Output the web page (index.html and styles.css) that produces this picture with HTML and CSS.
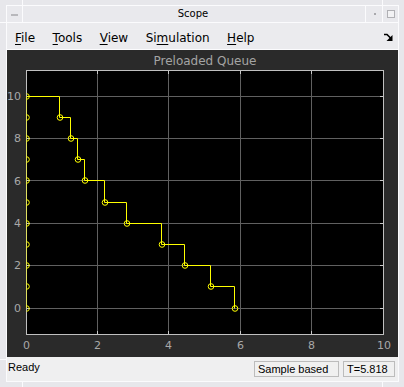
FILE: index.html
```html
<!DOCTYPE html>
<html>
<head>
<meta charset="utf-8">
<link rel="stylesheet" href="styles.css">
</head>
<body>
<div class="screen">
  <div class="window">
    <div class="titlebar">
      <div class="tb-btn tb-left"><span class="dash"></span></div>
      <div class="tb-title">Scope</div>
      <div class="tb-btn tb-dot"><span class="dot"></span></div>
      <div class="tb-btn tb-max"><span class="sq"></span></div>
    </div>
    <div class="menubar">
      <span class="menu"><u>F</u>ile</span>
      <span class="menu"><u>T</u>ools</span>
      <span class="menu"><u>V</u>iew</span>
      <span class="menu">Si<u>m</u>ulation</span>
      <span class="menu"><u>H</u>elp</span>
      <span class="spacer"></span>
      <svg class="dock" width="9" height="8" viewBox="0 0 9 8">
        <path d="M0 1.5 H3 L7 5.5" fill="none" stroke="#000" stroke-width="1.6"/>
        <path d="M8.5 2 V8 H2.5 Z" fill="#000"/>
      </svg>
    </div>
    <div class="plot">
      <svg width="390" height="307" viewBox="0 0 390 307">
        <defs>
          <clipPath id="ax"><rect x="19.5" y="20.5" width="357" height="264"/></clipPath>
        </defs>
        <rect x="0" y="0" width="390" height="307" fill="#2a2a2a"/>
        <text x="198" y="11" class="ptitle">Preloaded Queue</text>
        <rect x="19.5" y="20.5" width="357" height="264" fill="#000"/>
        <g stroke="#606060" stroke-width="1">
          <path d="M90.5 20.5 V284.5 M161.5 20.5 V284.5 M233.5 20.5 V284.5 M304.5 20.5 V284.5"/>
          <path d="M19.5 46.5 H376.5 M19.5 88.5 H376.5 M19.5 130.5 H376.5 M19.5 173.5 H376.5 M19.5 215.5 H376.5 M19.5 258.5 H376.5"/>
        </g>
        <g stroke="#c8c8c8" stroke-width="1">
          <path d="M90.5 284.5 V281 M161.5 284.5 V281 M233.5 284.5 V281 M304.5 284.5 V281"/>
          <path d="M90.5 20.5 V24 M161.5 20.5 V24 M233.5 20.5 V24 M304.5 20.5 V24"/>
          <path d="M19.5 46.5 H23 M19.5 88.5 H23 M19.5 130.5 H23 M19.5 173.5 H23 M19.5 215.5 H23 M19.5 258.5 H23"/>
          <path d="M376.5 46.5 H373 M376.5 88.5 H373 M376.5 130.5 H373 M376.5 173.5 H373 M376.5 215.5 H373 M376.5 258.5 H373"/>
        </g>
        <rect x="19.5" y="20.5" width="357" height="264" fill="none" stroke="#c0c0c0" stroke-width="1"/>
        <g class="ylab">
          <text x="14" y="46">10</text>
          <text x="14" y="88">8</text>
          <text x="14" y="131">6</text>
          <text x="14" y="173">4</text>
          <text x="14" y="215">2</text>
          <text x="14" y="258">0</text>
        </g>
        <g class="xlab">
          <text x="19.5" y="295">0</text>
          <text x="90.5" y="295">2</text>
          <text x="161.5" y="295">4</text>
          <text x="233.5" y="295">6</text>
          <text x="304.5" y="295">8</text>
          <text x="377" y="295">10</text>
        </g>
        <g clip-path="url(#ax)" fill="none" stroke="#ffff00" stroke-width="1">
          <path d="M19.5 46.5 V258.5"/>
          <path d="M19.5 46.5 H52.5 V67.5 H63.5 V88.5 H70.5 V109.5 H77.5 V130.5 H97.5 V152.5 H119.5 V173.5 H154.5 V194.5 H177.5 V215.5 H203.5 V236.5 H227.5 V258.5"/>
          <circle cx="19.5" cy="46.5" r="2.8"/>
          <circle cx="19.5" cy="67.5" r="2.8"/>
          <circle cx="19.5" cy="88.5" r="2.8"/>
          <circle cx="19.5" cy="109.5" r="2.8"/>
          <circle cx="19.5" cy="130.5" r="2.8"/>
          <circle cx="19.5" cy="152.5" r="2.8"/>
          <circle cx="19.5" cy="173.5" r="2.8"/>
          <circle cx="19.5" cy="194.5" r="2.8"/>
          <circle cx="19.5" cy="215.5" r="2.8"/>
          <circle cx="19.5" cy="236.5" r="2.8"/>
          <circle cx="19.5" cy="258.5" r="2.8"/>
          <circle cx="53" cy="67.5" r="2.8"/>
          <circle cx="64" cy="88.5" r="2.8"/>
          <circle cx="71" cy="109.5" r="2.8"/>
          <circle cx="78" cy="130.5" r="2.8"/>
          <circle cx="98" cy="152.5" r="2.8"/>
          <circle cx="120" cy="173.5" r="2.8"/>
          <circle cx="155" cy="194.5" r="2.8"/>
          <circle cx="178" cy="215.5" r="2.8"/>
          <circle cx="204" cy="236.5" r="2.8"/>
          <circle cx="228" cy="258.5" r="2.8"/>
        </g>
      </svg>
    </div>
    <div class="statusbar">
      <span class="ready">Ready</span>
      <span class="spacer"></span>
      <span class="sbox sbox-mode">Sample based</span>
      <span class="sbox sbox-time">T=5.818</span>
    </div>
  </div>
  <span class="mark mark-tl-v"></span>
  <span class="mark mark-tl-h"></span>
  <span class="mark mark-tr-v"></span>
  <span class="mark mark-bl-h"></span>
  <span class="mark mark-bl-v"></span>
  <span class="mark mark-br-v"></span>
</div>
</body>
</html>
```
FILE: styles.css
```css
html, body {
  margin: 0;
  padding: 0;
}
body {
  width: 404px;
  height: 387px;
  background: #e7e7eb;
  font-family: "DejaVu Sans", sans-serif;
  overflow: hidden;
}
.screen {
  position: relative;
  width: 404px;
  height: 387px;
  padding: 5px 0 0 6px;
  box-sizing: border-box;
}
.window {
  width: 393px;
  border: 1px solid #fbfbfd;
  display: flex;
  flex-direction: column;
  box-sizing: border-box;
}
.titlebar {
  height: 16px;
  display: flex;
  border-bottom: 1px solid #fbfbfd;
  background: #e9e9ed;
}
.tb-btn {
  display: flex;
  align-items: center;
  justify-content: center;
}
.tb-left {
  width: 15px;
  border-right: 1px solid #fbfbfd;
}
.dash {
  width: 7px;
  height: 2px;
  background: #b8b8bc;
  margin-top: 2px;
}
.tb-title {
  flex: 1;
  text-align: center;
  font-size: 10px;
  line-height: 16px;
  color: #000;
  padding-right: 2px;
}
.tb-dot {
  width: 16px;
  border-left: 1px solid #fbfbfd;
}
.dot {
  width: 2px;
  height: 2px;
  background: #a8a8ac;
  margin-left: 1px;
}
.tb-max {
  width: 15px;
  border-left: 1px solid #fbfbfd;
}
.sq {
  width: 6px;
  height: 6px;
  border: 1px solid #b0b0b4;
  background: #f2f2f4;
}
.menubar {
  height: 27px;
  box-sizing: border-box;
  display: flex;
  align-items: center;
  gap: 17.5px;
  padding: 3px 5px 0 8px;
  background: #ebebee;
  border-bottom: 1px solid #fbfbfd;
  font-size: 12px;
  color: #000;
}
.menu u {
  text-decoration: underline;
  text-underline-offset: 2px;
}
.spacer {
  flex: 1;
}
.dock {
  display: block;
  margin-top: -1px;
}
.plot {
  height: 307px;
  background: #2a2a2a;
}
.plot svg {
  display: block;
}
.ptitle {
  font-family: "DejaVu Sans", sans-serif;
  font-size: 12px;
  fill: #a4a4a4;
  text-anchor: middle;
  dominant-baseline: central;
}
.ylab text {
  font-family: "DejaVu Sans", sans-serif;
  font-size: 11px;
  fill: #a8a8a8;
  text-anchor: end;
  dominant-baseline: central;
}
.xlab text {
  font-family: "DejaVu Sans", sans-serif;
  font-size: 11px;
  fill: #a8a8a8;
  text-anchor: middle;
  dominant-baseline: central;
}
.statusbar {
  height: 24px;
  display: flex;
  align-items: flex-start;
  background: #efeff0;
  font-family: "Liberation Sans", sans-serif;
  font-size: 11px;
  color: #000;
  padding: 0 3px 0 1px;
}
.ready {
  margin-top: 3px;
  line-height: 14px;
}
.sbox {
  margin-top: 4px;
  height: 16px;
  box-sizing: border-box;
  border: 1px solid #bcbcbc;
  background: #f0f0f0;
  line-height: 14px;
  padding-left: 3px;
}
.sbox-mode {
  width: 85px;
  margin-right: 4px;
}
.sbox-time {
  width: 52px;
}
.mark {
  position: absolute;
  background: #fbfbfd;
}
.mark-tl-v { left: 22px; top: 0; width: 1px; height: 6px; }
.mark-tl-h { left: 0; top: 22px; width: 6px; height: 1px; }
.mark-tr-v { left: 382px; top: 0; width: 1px; height: 6px; }
.mark-bl-h { left: 0; top: 359px; width: 6px; height: 1px; }
.mark-bl-v { left: 22px; top: 382px; width: 1px; height: 5px; }
.mark-br-v { left: 382px; top: 382px; width: 1px; height: 5px; }
```
